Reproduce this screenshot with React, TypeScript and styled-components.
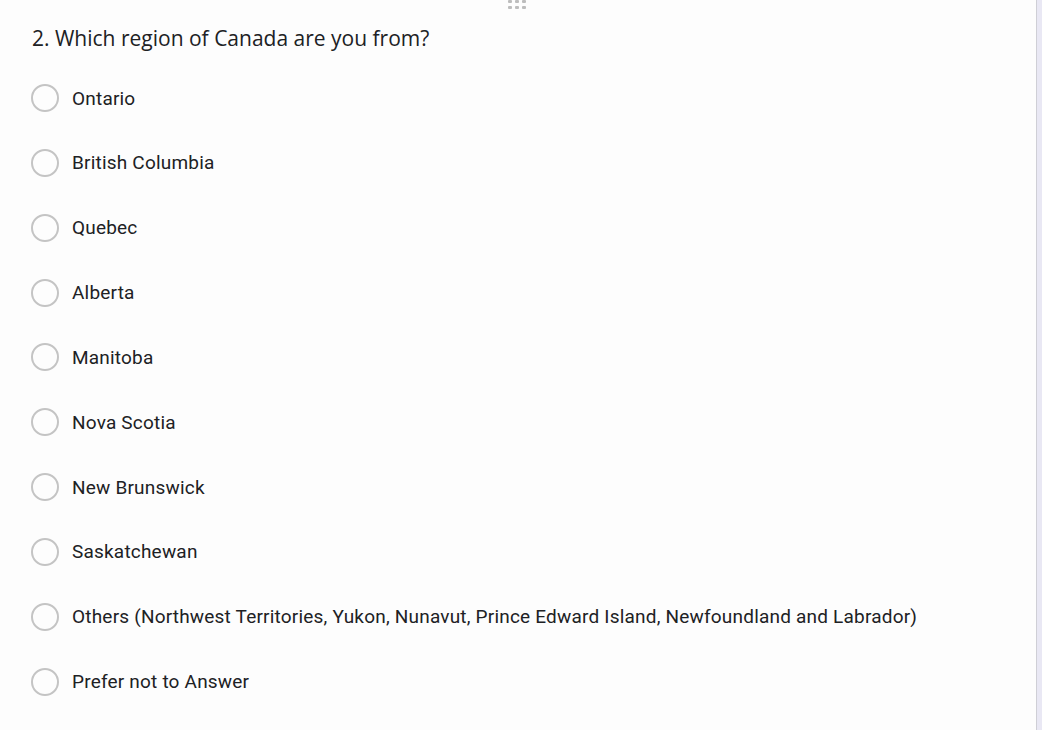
import React from "react";
import styled, { createGlobalStyle } from "styled-components";

const Global = createGlobalStyle`
  html, body { margin: 0; padding: 0; background: #fdfdfd; }
  body { width: 1042px; height: 730px; overflow: hidden; }
  #root { height: 730px; }
`;

const Page = styled.div`
  display: flex;
  height: 730px;
  width: 1042px;
`;

const Main = styled.main`
  flex: 1;
  display: flex;
  flex-direction: column;
  position: relative;
  padding: 0 0 0 31px;
`;

const Edge = styled.div`
  width: 5px;
  border-left: 1px solid #cfcfd6;
  background: #e9e8f4;
`;

const Handle = styled.div`
  position: absolute;
  top: 0;
  left: 508px;
  display: grid;
  grid-template-columns: repeat(3, 4px);
  column-gap: 3px;
  row-gap: 3px;
`;

const Dot = styled.span`
  width: 4px;
  height: 3px;
  background: #bdbdbd;
  border-radius: 1px;
`;

const Title = styled.h2`
  margin: 24px 0 20px 1px;
  font-family: "Open Sans", "Liberation Sans", sans-serif;
  font-weight: 400;
  font-size: 21px;
  line-height: 28px;
  color: #202124;
`;

const Options = styled.div`
  display: flex;
  flex-direction: column;
  gap: 12.85px;
`;

const Option = styled.label`
  display: flex;
  align-items: center;
  height: 52px;
  gap: 13px;
`;

const Radio = styled.span`
  width: 24px;
  height: 24px;
  border: 2px solid #c4c4c4;
  border-radius: 50%;
  box-sizing: content-box;
  flex: none;
`;

const Label = styled.span`
  font-family: Roboto, "Liberation Sans", sans-serif;
  font-size: 19px;
  color: #202124;
  letter-spacing: 0.2px;
`;

const options = [
  "Ontario",
  "British Columbia",
  "Quebec",
  "Alberta",
  "Manitoba",
  "Nova Scotia",
  "New Brunswick",
  "Saskatchewan",
  "Others (Northwest Territories, Yukon, Nunavut, Prince Edward Island, Newfoundland and Labrador)",
  "Prefer not to Answer",
];

export default function App() {
  return (
    <>
      <Global />
      <Page>
        <Main>
          <Handle>
            {Array.from({ length: 6 }).map((_, i) => (
              <Dot key={i} />
            ))}
          </Handle>
          <Title>2. Which region of Canada are you from?</Title>
          <Options>
            {options.map((o) => (
              <Option key={o}>
                <Radio />
                <Label>{o}</Label>
              </Option>
            ))}
          </Options>
        </Main>
        <Edge />
      </Page>
    </>
  );
}
